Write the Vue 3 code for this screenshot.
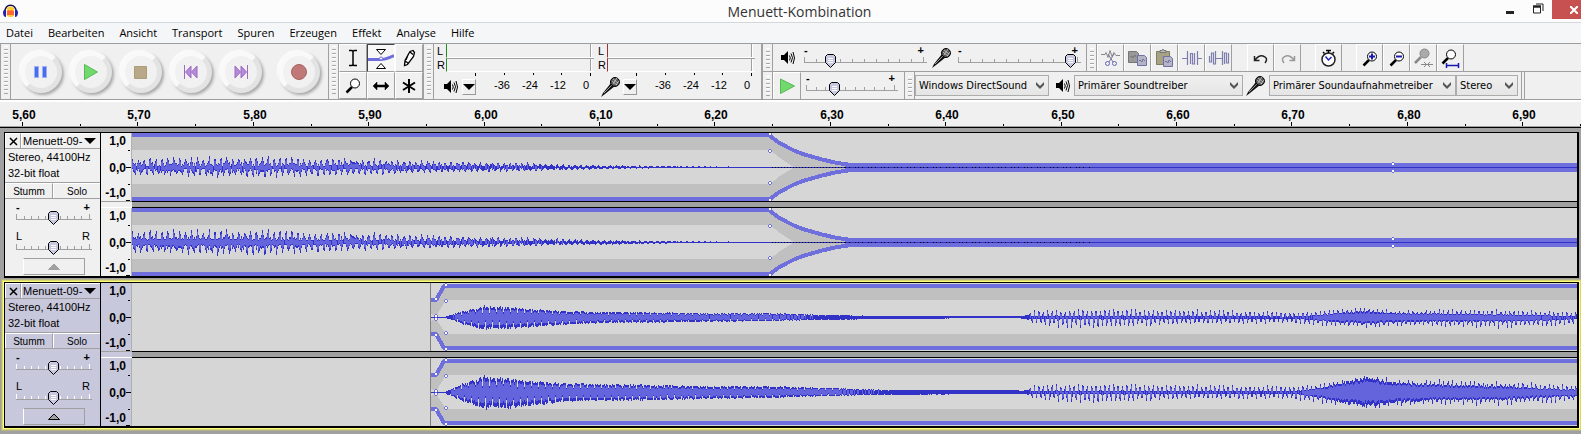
<script setup>
import { ref } from 'vue'

const menus = ['Datei', 'Bearbeiten', 'Ansicht', 'Transport', 'Spuren', 'Erzeugen', 'Effekt', 'Analyse', 'Hilfe']

const transport = [
  { id: 'pause', label: 'Pause' },
  { id: 'play', label: 'Wiedergabe' },
  { id: 'stop', label: 'Stopp' },
  { id: 'start', label: 'Zum Anfang' },
  { id: 'end', label: 'Zum Ende' },
  { id: 'record', label: 'Aufnahme' }
]
const tools = [
  { id: 'select', label: 'Auswahl' },
  { id: 'envelope', label: 'Hüllkurve' },
  { id: 'draw', label: 'Zeichnen' },
  { id: 'zoom', label: 'Zoom' },
  { id: 'shift', label: 'Verschieben' },
  { id: 'multi', label: 'Multi' }
]
const editGroups = [
  [
    { id: 'cut', label: 'Ausschneiden' },
    { id: 'copy', label: 'Kopieren' },
    { id: 'paste', label: 'Einfügen' },
    { id: 'trim', label: 'Trimmen' },
    { id: 'silence', label: 'Stille' }
  ],
  [
    { id: 'undo', label: 'Rückgängig' },
    { id: 'redo', label: 'Wiederholen' }
  ],
  [{ id: 'timer', label: 'Sync-Lock' }],
  [
    { id: 'zoomin', label: 'Vergrößern' },
    { id: 'zoomout', label: 'Verkleinern' },
    { id: 'fitsel', label: 'Auswahl einpassen' },
    { id: 'fitproj', label: 'Projekt einpassen' }
  ]
]
const meters = [
  { id: 'out', icon: 'speaker', label: 'Ausgabepegel' },
  { id: 'in', icon: 'mic', label: 'Eingabepegel' }
]
const devices = [
  { id: 'host', label: 'Audio-Host', value: 'Windows DirectSound', icon: null },
  { id: 'output', label: 'Ausgabegerät', value: 'Primärer Soundtreiber', icon: 'speaker' },
  { id: 'input', label: 'Eingabegerät', value: 'Primärer Soundaufnahmetreiber', icon: 'mic' },
  { id: 'channels', label: 'Kanäle', value: 'Stereo', icon: null }
]

const STEP = 115.4
const ruler = Array.from({ length: 14 }, (_, i) => ({
  x: Math.round(22 + i * STEP),
  half: Math.round(22 + (i + 0.5) * STEP),
  text: ((560 + i * 10) / 100).toFixed(2).replace('.', ',')
}))

const playVolume = ref(19)
const recVolume = ref(98)
const speed = ref(29)

/* Control points: x, peak above zero, peak below zero, body (0 = spiky, 1 = solid) */
const shapes = {
  a1: [[0, 9, 8, 0.1], [40, 11, 9, 0.1], [120, 11, 10, 0.1], [200, 10, 8, 0.1], [260, 8, 7, 0.1], [310, 6, 5, 0.1], [390, 5, 4, 0.1], [420, 3, 3, 0.1], [480, 2, 1, 0.1], [560, 1, 0, 0.4], [638, 0, 0, 0]],
  a2: [[0, 12, 11, 0.2], [40, 14, 12, 0.2], [120, 13, 13, 0.2], [200, 11, 9, 0.15], [260, 9, 7, 0.1], [310, 7, 6, 0.1], [390, 5, 4, 0.1], [420, 4, 3, 0.1], [480, 2, 2, 0.1], [560, 1, 0, 0.4], [638, 0, 0, 0]],
  b1: [[299, 0, 0, 1], [312, 0, 0, 1], [320, 3, 2, 0.8], [332, 7, 8, 0.8], [350, 11, 12, 0.85], [375, 11, 12, 0.85], [400, 8, 9, 0.9], [430, 6, 7, 0.9], [480, 5, 5, 0.9], [580, 4, 4, 0.9], [640, 4, 3, 0.9], [700, 2, 2, 0.9], [760, 1, 1, 0.9], [884, 1, 0, 0.9], [890, 1, 1, 0.6], [900, 7, 6, 0.15], [925, 7, 10, 0.1], [960, 8, 10, 0.1], [1000, 9, 9, 0.1], [1040, 8, 7, 0.1], [1100, 7, 6, 0.1], [1160, 5, 6, 0.1], [1180, 6, 8, 0.25], [1210, 10, 10, 0.45], [1235, 11, 11, 0.5], [1270, 7, 8, 0.5], [1310, 8, 9, 0.4], [1370, 8, 11, 0.3], [1400, 7, 10, 0.3], [1445, 5, 8, 0.15]],
  b2: [[299, 0, 0, 1], [312, 0, 0, 1], [320, 4, 4, 0.8], [332, 10, 11, 0.8], [350, 16, 16, 0.85], [375, 15, 17, 0.85], [395, 12, 14, 0.85], [430, 9, 9, 0.9], [480, 8, 8, 0.9], [580, 6, 6, 0.9], [640, 6, 5, 0.9], [700, 4, 3, 0.9], [760, 2, 2, 0.9], [884, 2, 1, 0.9], [890, 2, 1, 0.6], [900, 7, 6, 0.15], [925, 8, 9, 0.1], [960, 8, 10, 0.1], [1000, 9, 9, 0.1], [1040, 8, 7, 0.1], [1100, 7, 6, 0.1], [1160, 6, 7, 0.1], [1180, 8, 10, 0.35], [1210, 14, 14, 0.65], [1235, 19, 18, 0.7], [1270, 13, 13, 0.65], [1310, 13, 12, 0.55], [1370, 11, 13, 0.5], [1400, 10, 12, 0.4], [1445, 7, 10, 0.3]]
}

function buildWave(points, period, seed, overtone = 0) {
  let s = seed
  const rnd = () => {
    s = (s * 1664525 + 1013904223) % 4294967296
    return s / 4294967296
  }
  let peak = ''
  let body = ''
  let k = 0
  const end = points[points.length - 1][0]
  for (let x = points[0][0]; x < end; x++) {
    while (k < points.length - 2 && x >= points[k + 1][0]) k++
    const a = points[k]
    const b = points[k + 1]
    const t = (x - a[0]) / (b[0] - a[0])
    const mix = (i) => a[i] + (b[i] - a[i]) * t
    const solid = mix(3)
    const wave = (phase, p) => Math.max(0, Math.cos(2 * Math.PI * (x / p - phase)))
    const crest = (phase) => Math.max(Math.pow(wave(phase, period), 0.7), overtone * rnd())
    const notched = solid > 0.75 && mix(1) > 2
    const topNotch = notched && x % 7 === 0 ? 0.55 : 1
    const lowNotch = notched && x % 7 === 3 ? 0.45 : 1
    const top = Math.max(solid * (0.85 + rnd() * 0.3), crest(0) * (0.65 + rnd() * 0.4))
    const low = Math.max(solid * (0.85 + rnd() * 0.3), crest(0.45) * (0.65 + rnd() * 0.4))
    const up = Math.round(mix(1) * top * topNotch)
    const down = Math.round(mix(2) * low * lowNotch)
    peak += `M${x} ${34 - up}V${35 + down}`
    const bu = Math.floor(up * 0.78)
    const bd = Math.floor(down * 0.72)
    if (bu + bd > 2) body += `M${x} ${34 - bu}V${35 + bd}`
  }
  return { peak, body }
}

const tracks = [
  {
    id: 1,
    selected: false,
    channels: [buildWave(shapes.a1, 5.9, 7, 0.6), buildWave(shapes.a2, 5.9, 7, 0.6)]
  },
  {
    id: 2,
    selected: true,
    channels: [buildWave(shapes.b1, 4.4, 21), buildWave(shapes.b2, 4.4, 21)]
  }
]

const fadeHandles = [[638, 1], [638, 18], [638, 50], [638, 67], [1261, 31], [1261, 38]]
const clipHandles = [[304, 16], [304, 33], [304, 36], [304, 52], [314, 2], [314, 18], [314, 50], [314, 66]]
</script>

<template>
  <div class="app">
    <svg class="sprites" aria-hidden="true">
      <symbol id="speaker" viewBox="0 0 14 14">
        <path d="M0 4h3l4-4v13l-4-4H0z" fill="#000" />
        <path d="M8.500 4.500q1.500 2.500 0 5M10 2.500q3 4 0 9M12 1q3 6 0 12" fill="none" stroke="#000" />
      </symbol>
      <symbol id="mic" viewBox="0 0 20 20">
        <path d="M0 20l2-4 8-10 4 3-10 8z" fill="#111" />
        <path d="M3 16l8-8" stroke="#999" />
        <circle cx="14" cy="5" r="4.500" fill="#555" stroke="#000" />
        <path d="M11 4l5 4M12 2l5 4M12 7l4-6M15 8l3-4" stroke="#ddd" stroke-width=".7" />
      </symbol>
      <symbol id="glass" viewBox="0 0 16 16">
        <path d="M1.500 14.500L7 9" stroke="#000" stroke-width="2.500" />
        <circle cx="10" cy="5.500" r="4.500" fill="#fff" stroke="#000" />
      </symbol>
    </svg>

    <header class="titlebar">
      <svg class="logo" width="15" height="14" viewBox="0 0 15 14">
        <path d="M4 4q3-3 7 0v8q-3 2-7 0z" fill="#fc3" />
        <path d="M4 7l2-1 1 1 1-1 3 1v4H4z" fill="#f63" />
        <path d="M2 8C1-1 14-1 13 8" fill="none" stroke="#114" stroke-width="1.500" />
        <path d="M0 8q0-2 3-3v8q-3 0-3-5M15 8q0-2-3-3v8q3 0 3-5" fill="#22a" />
      </svg>
      <h1>Menuett-Kombination</h1>
      <div class="window-buttons">
        <button aria-label="Minimieren"><svg width="12" height="14"><path d="M2 12.500h8" stroke="#222" stroke-width="3" /></svg></button>
        <button aria-label="Wiederherstellen">
          <svg width="12" height="12"><path d="M1.500 4h7v6h-7zM1 3h8M4 1h7v7" fill="none" stroke="#222" stroke-width="1" /><path d="M1 3.500h8" stroke="#222" stroke-width="2" /></svg>
        </button>
        <button class="close" aria-label="Schließen"><svg width="8" height="8"><path d="M0 0l8 8M8 0L0 8" stroke="#fff" stroke-width="2" /></svg></button>
      </div>
    </header>

    <nav class="menubar">
      <a v-for="m in menus" :key="m" href="#">{{ m }}</a>
    </nav>

    <section class="toolbars">
      <div class="grip"></div>
      <div class="transport">
        <button v-for="t in transport" :key="t.id" class="round" :class="t.id" :aria-label="t.label">
          <svg width="18" height="18" viewBox="0 0 18 18">
            <g v-if="t.id === 'pause'" fill="#4a6cf0" stroke="#9db0f4"><path d="M2.500 3.500h4v11h-4zM10.500 3.500h4v11h-4z" /></g>
            <path v-else-if="t.id === 'play'" d="M2.500 1.500l13 7.500-13 7.500z" fill="#72da6c" stroke="#58b858" />
            <path v-else-if="t.id === 'stop'" d="M2.500 3.500h12v12h-12z" fill="#b8a888" stroke="#ad9c78" />
            <g v-else-if="t.id === 'start'" fill="#b58ad8" stroke="#9a6cc4"><path d="M2.500 2v14M9 3v12L3.500 9zM15 3v12L9.500 9z" /></g>
            <g v-else-if="t.id === 'end'" fill="#b58ad8" stroke="#9a6cc4"><path d="M15.500 2v14M9 3v12l5.500-6zM3 3v12l5.500-6z" /></g>
            <circle v-else cx="9" cy="9" r="7.500" fill="#c07878" stroke="#a86464" />
          </svg>
        </button>
      </div>

      <div class="grip"></div>
      <div class="tools">
        <button v-for="t in tools" :key="t.id" class="cell" :class="{ pressed: t.id === 'envelope' }" :aria-label="t.label">
          <svg width="26" height="24" viewBox="0 0 26 24">
            <path v-if="t.id === 'select'" d="M9 4.500h3l1 1 1-1h3M9 19.500h3l1-1 1 1h3M13 5v14" fill="none" stroke="#000" stroke-width="1.500" />
            <g v-else-if="t.id === 'envelope'">
              <path d="M0 13.500h12q5 0 14-4" fill="none" stroke="#6e6edc" stroke-width="3" />
              <path d="M8.500 3.500h9l-4.500 5zM8.500 22.500h9l-4.500-5z" fill="#fff" stroke="#000" />
              <circle cx="13" cy="12.500" r="1.500" fill="#fff" stroke="#6e6edc" />
            </g>
            <path v-else-if="t.id === 'draw'" d="M8.500 19.500l.500-5 5-9 3-1 1.500 2-1 4-6 8zM9 15l3 2M14 6l3 2.500M12 9l-2 5" fill="#fff" stroke="#000" stroke-width="1.300" />
            <use v-else-if="t.id === 'zoom'" href="#glass" x="5" y="4" width="16" height="16" />
            <path v-else-if="t.id === 'shift'" d="M5 12l4-4v3h8V8l4 4-4 4v-3H9v3z" fill="#000" stroke="#000" stroke-width=".5" />
            <path v-else d="M13 5v14M7 8.500l12 7.500M19 8.500L7 16" stroke="#000" stroke-width="2" />
          </svg>
        </button>
      </div>

      <div class="grip"></div>
      <div class="meters">
        <div v-for="m in meters" :key="m.id" class="meter" :class="m.id">
          <div class="bar-row"><span>L</span><i></i></div>
          <div class="bar-row"><span>R</span><i></i></div>
          <svg class="meter-ticks" width="161" height="5"><path d="M38.500 1v3M67.500 1v2M96.500 1v2M124.500 1v2M153.500 1v3" stroke="#000" /></svg>
          <div class="meter-foot">
            <svg :class="m.icon"><use :href="'#' + m.icon" /></svg>
            <button class="drop" :aria-label="m.label"><svg width="12" height="6"><path d="M0 0h12L6 6z" /></svg></button>
            <div class="scale-labels"><span>-36</span><span>-24</span><span>-12</span><span>0</span></div>
          </div>
        </div>
      </div>

      <div class="stack">
        <div class="bar">
          <div class="grip"></div>
          <div class="mixer">
            <svg class="speaker"><use href="#speaker" /></svg>
            <label class="slider">
              <span class="ends"><b>-</b><b>+</b></span>
              <svg class="scale" viewBox="0 0 123 8" preserveAspectRatio="none"><path d="M.5 1v5M12.500 3v3M24.500 3v3M36.500 3v3M48.500 3v3M60.500 3v3M72.500 3v3M84.500 3v3M95.500 3v3M107.500 3v3M119.500 1v5M0 6.500h123" /></svg>
              <input v-model="playVolume" type="range" aria-label="Wiedergabelautstärke" />
            </label>
            <svg class="mic"><use href="#mic" /></svg>
            <label class="slider">
              <span class="ends"><b>-</b><b>+</b></span>
              <svg class="scale" viewBox="0 0 123 8" preserveAspectRatio="none"><path d="M.5 1v5M12.500 3v3M24.500 3v3M36.500 3v3M48.500 3v3M60.500 3v3M72.500 3v3M84.500 3v3M95.500 3v3M107.500 3v3M119.500 1v5M0 6.500h123" /></svg>
              <input v-model="recVolume" type="range" aria-label="Aufnahmelautstärke" />
            </label>
          </div>
          <div class="grip"></div>
          <div class="edit">
            <div v-for="(g, gi) in editGroups" :key="gi" class="group">
              <button v-for="b in g" :key="b.id" class="cell" :aria-label="b.label">
                <svg width="24" height="24" viewBox="0 0 24 24">
                  <g v-if="b.id === 'cut'" fill="none">
                    <path d="M2 8.500h4l1-2 2 5 2-7 2 6 2-4 2 3h4" stroke="#888" />
                    <path d="M9 8l5 8M15 8l-5 8" stroke="#777799" />
                    <circle cx="8.500" cy="17.500" r="2" stroke="#6464b4" /><circle cx="15.500" cy="17.500" r="2" stroke="#6464b4" />
                  </g>
                  <g v-else-if="b.id === 'copy'">
                    <path d="M2.500 5.500h8l2 2v9h-10z" fill="#999" stroke="#777" /><path d="M4 11l2-1 1 2 2-3 1 2" stroke="#777" fill="none" />
                    <path d="M11.500 9.500h7l2 2v8h-9z" fill="#b4b4c4" stroke="#7070a8" /><path d="M13 15l1-1 2 2 1-3 2 2" stroke="#7070a8" fill="none" />
                  </g>
                  <g v-else-if="b.id === 'paste'">
                    <path d="M3.500 5.500h13v13h-13z" fill="#a8a284" stroke="#807c60" /><path d="M7 6.500V4.500h2l1-1.500 1 1.500h2v2z" fill="#bbb" stroke="#777" />
                    <path d="M10.500 10.500h7l2 2v8h-9z" fill="#b4b4c4" stroke="#7070a8" /><path d="M12 16l1-1 2 2 1-3 2 2" stroke="#7070a8" fill="none" />
                  </g>
                  <path v-else-if="b.id === 'trim'" d="M2 12.500h5M17 12.500h5M7.500 5v14M17.500 5v14M10.500 18V7.500h2V18h2V7" stroke="#7c7cae" stroke-width="1.200" fill="none" />
                  <path v-else-if="b.id === 'silence'" d="M2.500 10v6h2V7h2v11h2V5M8.500 12.500h7M15.500 5v14M17.500 18V7h2v10h2V7" stroke="#7c7cae" stroke-width="1.200" fill="none" />
                  <path v-else-if="b.id === 'undo'" d="M5.500 10v4.500h5M6 14q4-5 8-4 6 2 2 7" fill="none" stroke="#222" stroke-width="1.500" />
                  <path v-else-if="b.id === 'redo'" d="M18.500 10v4.500h-5M18 14q-4-5-8-4-6 2-2 7" fill="none" stroke="#999" stroke-width="1.500" />
                  <g v-else-if="b.id === 'timer'">
                    <circle cx="11.500" cy="13.500" r="6.500" fill="#fff" stroke="#222" stroke-width="1.500" />
                    <path d="M11.500 4v3M9 4.500h5M6 6l1.500 1.500M17 6l-1.500 1.500" stroke="#000" stroke-width="1.500" />
                    <path d="M8.500 10.500l3 3.500 3-3" stroke="#2020c0" stroke-width="1.500" fill="none" />
                  </g>
                  <g v-else-if="b.id === 'zoomin'"><use href="#glass" x="4" y="5" width="16" height="16" /><path d="M11 10.500h6M14 7.500v6" stroke="#1818b0" stroke-width="2" /></g>
                  <g v-else-if="b.id === 'zoomout'"><use href="#glass" x="4" y="5" width="16" height="16" /><path d="M11 10.500h6" stroke="#1818b0" stroke-width="2" /></g>
                  <g v-else-if="b.id === 'fitsel'">
                    <path d="M3 17l6-6" stroke="#888" stroke-width="2.500" /><circle cx="12.500" cy="7.500" r="4.500" fill="#aaa" stroke="#888" />
                    <path d="M9 18.500h12M12 16l2.500 2.500L12 21M18 16l-2.500 2.500L18 21" stroke="#888" fill="none" />
                  </g>
                  <g v-else><use href="#glass" x="2" y="3" width="16" height="16" /><path d="M8 19.500h11M7.500 17v5M19.500 17v5" stroke="#1818b0" stroke-width="1.500" /></g>
                </svg>
              </button>
            </div>
          </div>
        </div>
        <div class="bar">
          <div class="grip"></div>
          <button class="cell play-speed" aria-label="Wiedergabe mit Tempo"><svg width="16" height="16"><path d="M1.500 1l14 7-14 7.500z" fill="#72da6c" stroke="#58b858" /></svg></button>
          <label class="slider speed">
            <span class="ends"><b>-</b><b>+</b></span>
            <svg class="scale" viewBox="0 0 92 8" preserveAspectRatio="none"><path d="M.5 1v5M10.500 3v3M19.500 3v3M29.500 3v3M39.500 3v3M49.500 3v3M58.500 3v3M68.500 3v3M78.500 3v3M88.500 1v5M0 6.500h92" /></svg>
            <input v-model="speed" type="range" aria-label="Wiedergabetempo" />
          </label>
          <div class="grip"></div>
          <div class="devices">
            <template v-for="d in devices" :key="d.id">
              <svg v-if="d.icon" :class="d.icon"><use :href="'#' + d.icon" /></svg>
              <span class="combo" :class="d.id">
                <select :aria-label="d.label"><option>{{ d.value }}</option></select>
                <svg width="8" height="7"><path d="M0 0l4 4 4-4v3L4 7 0 3z" fill="#555" /></svg>
              </span>
            </template>
            <div class="end-mark"></div>
          </div>
        </div>
      </div>
    </section>

    <svg class="timeline">
      <g v-for="r in ruler" :key="r.text">
        <text :x="r.x + 2" y="17" text-anchor="middle">{{ r.text }}</text>
        <path :d="`M${r.x + 0.5} 20v4M${r.half + 0.5} 22v2`" stroke="#000" />
      </g>
    </svg>

    <main class="tracks">
      <article v-for="t in tracks" :key="t.id" class="track" :class="{ selected: t.selected }">
        <aside class="panel">
          <div class="head">
            <button class="x" aria-label="Spur schließen"><svg width="9" height="9"><path d="M1 1l7 7M8 1L1 8" stroke="#000" stroke-width="1.500" /></svg></button>
            <button class="name">Menuett-09-<svg width="12" height="6"><path d="M0 0h12L6 6z" /></svg></button>
          </div>
          <p>Stereo, 44100Hz<br />32-bit float</p>
          <div class="pair"><button>Stumm</button><button>Solo</button></div>
          <label class="slider gain">
            <span class="ends"><b>-</b><b>+</b></span>
            <svg class="scale" viewBox="0 0 76 8" preserveAspectRatio="none"><path d="M.5 1v5M8.500 3v3M15.500 3v3M22.500 3v3M29.500 3v3M44.500 3v3M51.500 3v3M58.500 3v3M65.500 3v3M73.500 1v5" /><path class="base" d="M0 6.500h76" /></svg>
            <input type="range" value="52" aria-label="Lautstärke" />
          </label>
          <label class="slider pan">
            <span class="ends"><span>L</span><span>R</span></span>
            <svg class="scale" viewBox="0 0 76 8" preserveAspectRatio="none"><path d="M.5 1v5M8.500 3v3M15.500 3v3M22.500 3v3M29.500 3v3M44.500 3v3M51.500 3v3M58.500 3v3M65.500 3v3M73.500 1v5" /><path class="base" d="M0 6.500h76" /></svg>
            <input type="range" value="52" aria-label="Balance" />
          </label>
          <button class="collapse" aria-label="Spur einklappen"><svg width="12" height="7"><path d="M.5 6.500L6 1l5.500 5.500z" /></svg></button>
        </aside>

        <div class="channels">
          <div v-for="(c, ci) in t.channels" :key="ci" class="channel">
            <svg class="vruler">
              <text x="25" y="12" text-anchor="end">1,0</text>
              <text x="25" y="39" text-anchor="end">0,0</text>
              <text x="25" y="64" text-anchor="end">-1,0</text>
              <path d="M27 17.500h2M25 34.500h5M27 51.500h2M25 67.500h4" stroke="#000" />
            </svg>
            <svg class="wave" shape-rendering="crispEdges">
              <template v-if="!t.selected">
                <path d="M0 0H638V17H0zM0 51H638V68H0z" fill="#c0c0c0" />
                <path d="M638 3L655 14 671 21 688 26 705 30 719 34.500 705 39 688 43 671 48 655 55 638 66V51L648 43 662 34.500 648 25 638 17z" fill="#c0c0c0" />
                <path d="M0 34.500H719" stroke="#000" />
                <path :d="c.peak" class="peak" />
                <path :d="c.body" class="body" />
                <path d="M0 2H638M0 66H638" class="env" />
                <path d="M638 3L646 9 655 14 663 18 671 21 688 26 705 30 720 32M638 66L646 60 655 55 663 51 671 48 688 43 705 39 720 37" class="env" />
                <path d="M560 34.500H713" stroke="#3232c8" stroke-dasharray="2 1" />
                <rect x="713" y="30" width="100%" height="9" fill="#6e6edc" />
                <rect x="713" y="34" width="100%" height="1" fill="#3232c8" />
                <path d="M713 34.500H960" stroke="#000" stroke-dasharray="1 3 1 5 1 2" />
                <path v-for="(h, hi) in fadeHandles" :key="hi" :d="`M${h[0] - 1} ${h[1] - 2}h2v1h1v2h-1v1h-2v-1h-1v-2h1z`" class="ring" />
                <path v-for="(h, hi) in fadeHandles" :key="'w' + hi" :d="`M${h[0] - 1} ${h[1] - 1}h2v2h-2z`" fill="#fff" />
              </template>
              <template v-else>
                <path d="M299 17H304L312 3H3000V17H314L304 33 299 31zM299 52H304L312 66H3000V51H314L304 36 299 38z" fill="#c0c0c0" />
                <path d="M298.500 0V68" stroke="#808080" />
                <path d="M312 34.500H3000" stroke="#000" />
                <path :d="c.peak" class="peak" />
                <path :d="c.body" class="body" />
                <path d="M299 17H304L312 3H3000M299 51H304L312 65H3000" class="env" />
                <path v-for="(h, hi) in clipHandles" :key="hi" :d="`M${h[0] - 1} ${h[1] - 2}h2v1h1v2h-1v1h-2v-1h-1v-2h1z`" class="ring" />
                <path v-for="(h, hi) in clipHandles" :key="'w' + hi" :d="`M${h[0] - 1} ${h[1] - 1}h2v2h-2z`" fill="#fff" />
              </template>
            </svg>
          </div>
        </div>
      </article>
    </main>
  </div>
</template>

<style>
body {
  margin: 0;
}
</style>

<style scoped>
.app {
  min-height: 100vh;
  display: flex;
  flex-direction: column;
  overflow: hidden;
  background: #a0a0a0;
  font: 11px/16px "Liberation Sans", Arial, sans-serif;
  color: #000;
}
.app * {
  box-sizing: border-box;
}
.sprites {
  position: absolute;
  width: 0;
  height: 0;
}
svg {
  display: block;
  flex: none;
}
button {
  padding: 0;
  border: 0;
  background: none;
  font: inherit;
  color: inherit;
}
.titlebar {
  display: grid;
  grid-template-columns: 1fr auto 1fr;
  height: 23px;
  background: #fcfcfc;
  border-bottom: 1px solid #d5d8db;
}
.logo {
  margin: 4px 0 0 3px;
}
h1 {
  margin: 0;
  padding-left: 18px;
  font: 14px/23px "Open Sans", "Noto Sans", sans-serif;
  color: #333;
}
.window-buttons {
  display: flex;
  justify-content: flex-end;
  align-items: flex-start;
  gap: 16px;
}
.window-buttons button {
  padding-top: 3px;
}
.window-buttons button:first-child {
  padding-top: 0;
}
.window-buttons button.close {
  display: flex;
  justify-content: flex-end;
  width: 29px;
  height: 19px;
  margin-left: -8px;
  padding: 6px 3px 0 0;
  background: #c75050;
}
.menubar {
  display: flex;
  gap: 15px;
  height: 20px;
  padding-left: 6px;
  background: #f5f6f7;
}
.menubar a {
  font: 11px/20px "Open Sans", "Noto Sans", sans-serif;
  color: #000;
  text-decoration: none;
}
.toolbars {
  display: flex;
  height: 57px;
  border-top: 1px solid #9d9d9d;
  border-bottom: 1px solid #9d9d9d;
  background: #f0f0f0;
}
.grip {
  flex: none;
  width: 11px;
  border-right: 1px solid #a0a0a0;
  border-left: 1px solid #a0a0a0;
  background: repeating-linear-gradient(#fff 0 1px, #f0f0f0 1px 3px, #a8a8a8 3px 4px) 3px 2px / 4px 48px no-repeat;
}
.transport {
  display: flex;
  align-items: center;
  gap: 8px;
  width: 317px;
  padding-left: 9px;
}
.round {
  display: grid;
  place-items: center;
  width: 42px;
  height: 42px;
  border: 5px solid #f9f9f9;
  border-right-color: #e3e3e3;
  border-bottom-color: #e3e3e3;
  border-radius: 50%;
  background: #f1f1f1;
  box-shadow: 2px 2px 3px #aaa, -1px -1px 2px #fff;
}
.round.record {
  margin-left: 8px;
}
.cell {
  display: grid;
  place-items: center;
  width: 27px;
  height: 27px;
  border-left: 1px solid #fff;
  border-top: 1px solid #fff;
  border-right: 1px solid #a0a0a0;
}
.tools {
  display: grid;
  grid-template-columns: repeat(3, 28px);
  grid-template-rows: 28px 27px;
}
.tools .cell {
  width: 28px;
  height: 100%;
  border-bottom: 1px solid #a0a0a0;
}
.tools .pressed {
  border-left-color: #444;
  border-top-color: #444;
  border-right-color: #fff;
  background: #f7f7f7;
}
.meters {
  display: flex;
  width: 328px;
  padding-left: 3px;
  border-right: 1px solid #a0a0a0;
}
.meter {
  width: 161px;
}
.bar-row {
  display: flex;
  height: 14px;
  line-height: 14px;
}
.bar-row span {
  width: 9px;
}
.bar-row i {
  width: 148px;
  border-left: 1px solid #228b22;
  border-bottom: 1px solid #fff;
  background: linear-gradient(90deg, #a0a0a0 0 1px, #fff 1px 2px) right 2px top / 2px 100% no-repeat;
}
.bar-row + .bar-row i {
  border-top: 1px solid #a0a0a0;
}
.meter.in i {
  border-left-color: #a03030;
}
.meter-foot {
  display: flex;
  align-items: center;
  height: 18px;
  margin-top: 1px;
}
.speaker {
  width: 14px;
  height: 14px;
}
.mic {
  width: 20px;
  height: 20px;
}
.meter-foot .speaker {
  margin: 0 4px 0 7px;
}
.meter-foot .mic {
  margin: 0 2px 0 3px;
}
.drop {
  display: grid;
  place-items: center;
  width: 18px;
  height: 16px;
  border: 1px solid;
  border-color: #fff #999 #999 #fff;
}
.scale-labels {
  display: flex;
  margin: -4px 0 0 12px;
}
.scale-labels span {
  width: 28px;
  text-align: center;
}
.stack {
  flex: 1;
}
.bar {
  display: flex;
  height: 27px;
}
.bar + .bar {
  height: 28px;
  border-top: 1px solid #a0a0a0;
}
.bar > .grip {
  background-size: 4px 20px;
  background-position: 3px 4px;
}
.mixer {
  display: flex;
  align-items: center;
  width: 313px;
  padding-left: 8px;
}
.mixer .speaker {
  margin-right: 9px;
}
.mixer .mic {
  margin: 0 6px 0 5px;
}
.slider {
  display: grid;
  flex: none;
  width: 123px;
  height: 27px;
}
.slider > * {
  grid-area: 1 / 1;
}
.ends {
  display: flex;
  justify-content: space-between;
  padding-right: 3px;
  line-height: 13px;
}
.scale {
  width: 100%;
  height: 8px;
  margin-top: 12px;
  fill: none;
  stroke: #a0a0a0;
}
.slider input {
  appearance: none;
  width: calc(100% - 3px);
  height: 14px;
  margin: 10px 0 0;
  background: none;
}
.slider input::-webkit-slider-thumb {
  appearance: none;
  width: 11px;
  height: 14px;
  background: url("data:image/svg+xml,%3Csvg xmlns='http://www.w3.org/2000/svg' width='11' height='14'%3E%3Cpath d='M.5 2.500l2-2h6l2 2v6l-5 5-5-5z' fill='%23c8c8e0' stroke='%23000'/%3E%3Cpath d='M3 4.500h5M3 6.500h5M3 8.500h5' stroke='%23fff'/%3E%3C/svg%3E");
}
.edit {
  display: flex;
  gap: 14px;
}
.group {
  display: flex;
}
.group:first-child {
  padding-right: 1px;
}
.slider.speed {
  width: 92px;
  margin: 0 6px 0 5px;
}
.play-speed {
  width: 28px;
}
.devices {
  display: flex;
  align-items: center;
}
.devices .speaker {
  margin: 0 4px 0 7px;
}
.devices .mic {
  margin: 0 3px;
}
.combo {
  display: grid;
  width: 134px;
  height: 21px;
}
.combo > * {
  grid-area: 1 / 1;
}
.combo svg {
  place-self: center end;
  margin-right: 5px;
  pointer-events: none;
}
.combo select {
  appearance: none;
  width: 100%;
  padding: 0 0 0 3px;
  border: 1px solid #acacac;
  border-radius: 0;
  background: linear-gradient(#f0f0f0, #e5e5e5);
  font: 11px/18px "DejaVu Sans Condensed", "Open Sans", sans-serif;
  color: #000;
}
.combo.output {
  width: 169px;
}
.combo.input {
  width: 187px;
}
.combo.channels {
  width: 62px;
}
.end-mark {
  align-self: stretch;
  width: 4px;
  margin-left: 3px;
  border: 1px solid #a0a0a0;
  border-width: 0 1px;
}
.timeline {
  width: 100%;
  height: 27px;
  background: #f0f0f0;
  border-top: 2px solid #fff;
  border-bottom: 1px solid #a0a0a0;
}
.timeline text,
.vruler text {
  font: bold 12px "Liberation Sans", Arial, sans-serif;
}
.tracks {
  flex: 1;
  display: flex;
  flex-direction: column;
  gap: 4px;
  padding: 4px 2px 6px 4px;
  border-top: 1px solid #000;
}
.track {
  display: flex;
  border: 1px solid #000;
  border-width: 1px 2px 2px 1px;
  background: #f0f0f0;
}
.track.selected {
  background: #c8c8dc;
  box-shadow: 0 0 0 1px #ffff7d, 0 0 0 2px #d7d76e, 0 0 0 3px #b4b488;
}
.panel {
  flex: none;
  width: 96px;
  border-right: 1px solid #000;
}
.head {
  display: flex;
  height: 16px;
  border-bottom: 1px solid #a0a0a0;
}
.head button {
  display: flex;
  align-items: center;
  border: 1px solid #fff;
  border-width: 1px 0 0 1px;
}
.head .x {
  justify-content: center;
  width: 16px;
  border-right: 1px solid #a0a0a0;
}
.head .name {
  flex: 1;
  justify-content: space-between;
  padding: 0 4px 0 1px;
}
.panel p {
  height: 33px;
  margin: 0;
  padding: 0 0 0 3px;
}
.pair {
  display: flex;
  height: 17px;
  border: 1px solid #a0a0a0;
  border-width: 1px 0;
}
.pair button {
  flex: 1;
  font-size: 10px;
  line-height: 13px;
  border: 1px solid #fff;
  border-width: 1px 0 0 1px;
}
.pair button:first-child {
  border-right: 1px solid #a0a0a0;
}
.panel .slider {
  width: 76px;
  margin-left: 11px;
}
.panel .ends {
  padding-right: 2px;
}
.panel .gain {
  margin-top: 2px;
}
.panel .pan {
  margin-top: 3px;
}
.panel .pan .ends {
  line-height: 11px;
}
.selected .scale path {
  stroke: #fff;
}
.selected .scale .base {
  stroke: #a0a0a0;
}
.collapse {
  display: grid;
  place-items: center;
  width: 62px;
  height: 17px;
  margin-left: 18px;
  border: 1px solid;
  border-color: #a0a0a0 #a0a0a0 #a0a0a0 #fff;
  fill: #a0a0a0;
  stroke: #a0a0a0;
}
.selected .collapse {
  stroke: #000;
}
.channels {
  flex: 1;
  min-width: 0;
}
.channel {
  display: flex;
}
.channel + .channel {
  margin-top: 7px;
}
.vruler {
  border-right: 1px solid #b0b0b0;
  width: 31px;
  height: 68px;
  box-shadow: 0 1px 0 #a0a0a0;
}
.channel + .channel .vruler {
  box-shadow: 0 -1px 0 #fff;
}
.wave {
  flex: 1;
  min-width: 0;
  height: 68px;
  overflow: hidden;
  background: #d6d6d6;
}
.channel:first-child .wave {
  box-shadow: 0 1px 0 #000, 0 6px 0 #a0a0a0, 0 7px 0 #000;
}
.peak {
  stroke: #3232c8;
  transform: translateX(0.5px);
}
.body {
  stroke: #6464dc;
  transform: translateX(0.5px);
}
.env {
  fill: none;
  stroke: #6e6edc;
  stroke-width: 4px;
}
.ring {
  fill: #6e6edc;
}
</style>
